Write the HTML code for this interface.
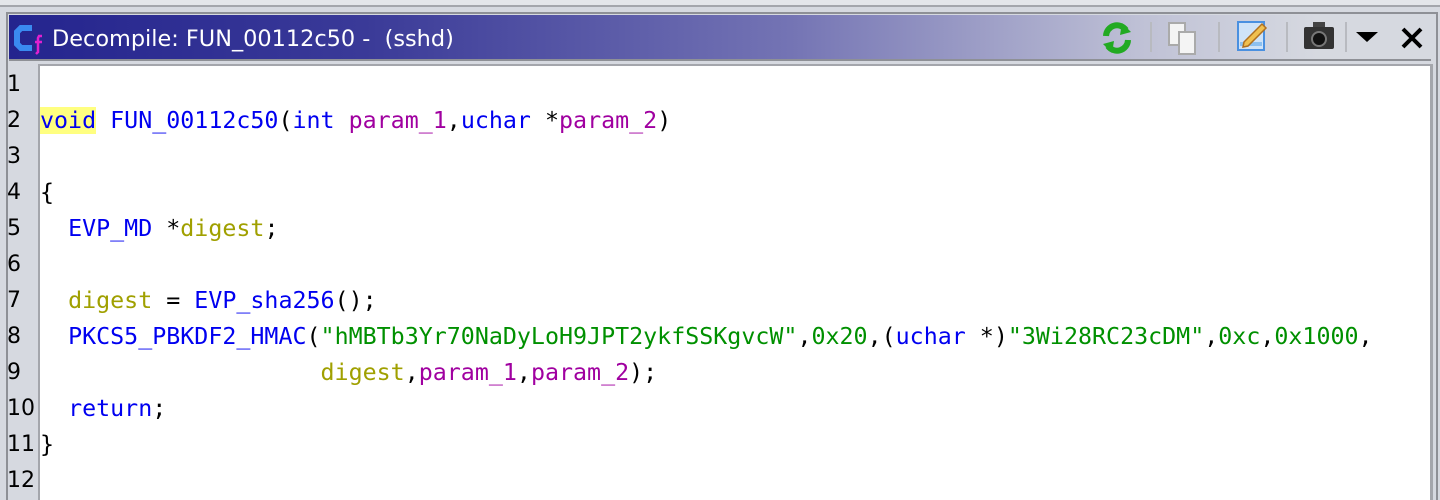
<!DOCTYPE html>
<html style="height:500px;overflow:hidden"><head><style>
body{margin:0;width:1440px;height:500px;background:#d6d9e0;position:relative;overflow:hidden;font-family:"Liberation Sans",sans-serif}
.topline{position:absolute;left:0;top:0;width:1440px;height:5px;background:#e4e6ea;border-bottom:2px solid #a4a6ac}
.panel{position:absolute;left:6px;top:12px;width:1428px;height:488px;border:2px solid #8e9096;border-bottom:none;background:#d6d9e0}
.title{position:absolute;left:9px;top:15px;width:1422px;height:44px;background:linear-gradient(90deg,#24248e 0%,#3a3a98 25%,#7474b4 55%,#c0c2d6 80%,#d6d9e0 92%);border-bottom:2px solid #8e9096}
.ttext{position:absolute;left:52px;top:25px;color:#fff;font-family:"DejaVu Sans",sans-serif;font-size:22.4px;line-height:28px}
.code{position:absolute;left:38px;top:64px;width:1390px;height:436px;background:#fff;border-left:2px solid #a4a6ac;border-top:2px solid #a4a6ac;border-right:3px solid #a4a6ac}
.ln{position:absolute;left:7px;font-family:"DejaVu Sans",sans-serif;font-size:22px;color:#000;line-height:36px}
.line{position:absolute;left:40px;font-family:"DejaVu Sans Mono",monospace;font-size:23.3px;line-height:36px;white-space:pre;color:#000}
.k{color:#0000f0}.p{color:#a000a0}.o{color:#a0a000}.s{color:#009000}
.hl{background:#ffff80}
.sep{position:absolute;top:22px;width:2px;height:30px;background:#b8bac0}
</style></head><body>
<div class="topline"></div>
<div class="panel"></div>
<div class="title"></div>
<svg style="position:absolute;left:12px;top:22px" width="34" height="34" viewBox="0 0 34 34">
<path d="M20 6 H9 L5 10 V22 L9 26 H20" fill="none" stroke="#3a8af0" stroke-width="6"/>
<path d="M30 14 H27 L26 16 V30 L24 32 M23 20 H30" fill="none" stroke="#e020d0" stroke-width="2.5"/>
</svg>
<div class="ttext">Decompile: FUN_00112c50 -&nbsp; (sshd)</div>
<svg style="position:absolute;left:1100px;top:20px" width="34" height="36" viewBox="0 0 34 36">
<path d="M6 16 A11 11 0 0 1 26 10" fill="none" stroke="#22aa22" stroke-width="6"/>
<path d="M22 3 L31 12 L20 15 Z" fill="#22aa22"/>
<path d="M28 20 A11 11 0 0 1 8 26" fill="none" stroke="#22aa22" stroke-width="6"/>
<path d="M12 33 L3 24 L14 21 Z" fill="#22aa22"/>
</svg>
<div class="sep" style="left:1150px"></div>
<svg style="position:absolute;left:1166px;top:20px" width="36" height="36" viewBox="0 0 36 36">
<rect x="3" y="3" width="16" height="22" fill="#f4f4f4" stroke="#aaa" stroke-width="2"/>
<rect x="13" y="12" width="16" height="22" fill="#f4f4f4" stroke="#aaa" stroke-width="2"/>
</svg>
<div class="sep" style="left:1218px"></div>
<svg style="position:absolute;left:1236px;top:20px" width="34" height="34" viewBox="0 0 34 34">
<rect x="2" y="2" width="26" height="28" fill="#cfe3f8" stroke="#4a90e0" stroke-width="2"/>
<rect x="4" y="22" width="22" height="4" fill="#8cc0f0"/>
<path d="M8 22 L26 4 L30 8 L12 26 L7 27 Z" fill="#f0c050" stroke="#b07020" stroke-width="1.5"/>
</svg>
<div class="sep" style="left:1286px"></div>
<svg style="position:absolute;left:1302px;top:20px" width="36" height="34" viewBox="0 0 36 34">
<rect x="11" y="2" width="12" height="6" fill="#444"/>
<rect x="2" y="7" width="30" height="22" rx="2" fill="#333"/>
<circle cx="17" cy="19" r="7" fill="#111" stroke="#777" stroke-width="2"/>
</svg>
<div class="sep" style="left:1345px"></div>
<svg style="position:absolute;left:1356px;top:30px" width="22" height="14"><path d="M0 2 H22 L11 12 Z" fill="#000"/></svg>
<svg style="position:absolute;left:1400px;top:26px" width="24" height="24"><path d="M3 3 L21 21 M21 3 L3 21" stroke="#000" stroke-width="4"/></svg>

<div class="code"></div>
<div class="ln" style="top:67px">1</div>
<div class="ln" style="top:103px">2</div>
<div class="ln" style="top:139px">3</div>
<div class="ln" style="top:175px">4</div>
<div class="ln" style="top:211px">5</div>
<div class="ln" style="top:247px">6</div>
<div class="ln" style="top:283px">7</div>
<div class="ln" style="top:319px">8</div>
<div class="ln" style="top:355px">9</div>
<div class="ln" style="top:391px">10</div>
<div class="ln" style="top:427px">11</div>
<div class="ln" style="top:463px">12</div>

<div class="line" style="top:103px"><span class="k hl">void</span> <span class="k">FUN_00112c50</span>(<span class="k">int</span> <span class="p">param_1</span>,<span class="k">uchar</span> *<span class="p">param_2</span>)</div>
<div class="line" style="top:175px">{</div>
<div class="line" style="top:211px">  <span class="k">EVP_MD</span> *<span class="o">digest</span>;</div>
<div class="line" style="top:283px">  <span class="o">digest</span> = <span class="k">EVP_sha256</span>();</div>
<div class="line" style="top:319px">  <span class="k">PKCS5_PBKDF2_HMAC</span>(<span class="s">"hMBTb3Yr70NaDyLoH9JPT2ykfSSKgvcW"</span>,<span class="s">0x20</span>,(<span class="k">uchar</span> *)<span class="s">"3Wi28RC23cDM"</span>,<span class="s">0xc</span>,<span class="s">0x1000</span>,</div>
<div class="line" style="top:355px">                    <span class="o">digest</span>,<span class="p">param_1</span>,<span class="p">param_2</span>);</div>
<div class="line" style="top:391px">  <span class="k">return</span>;</div>
<div class="line" style="top:427px">}</div>
</body></html>
